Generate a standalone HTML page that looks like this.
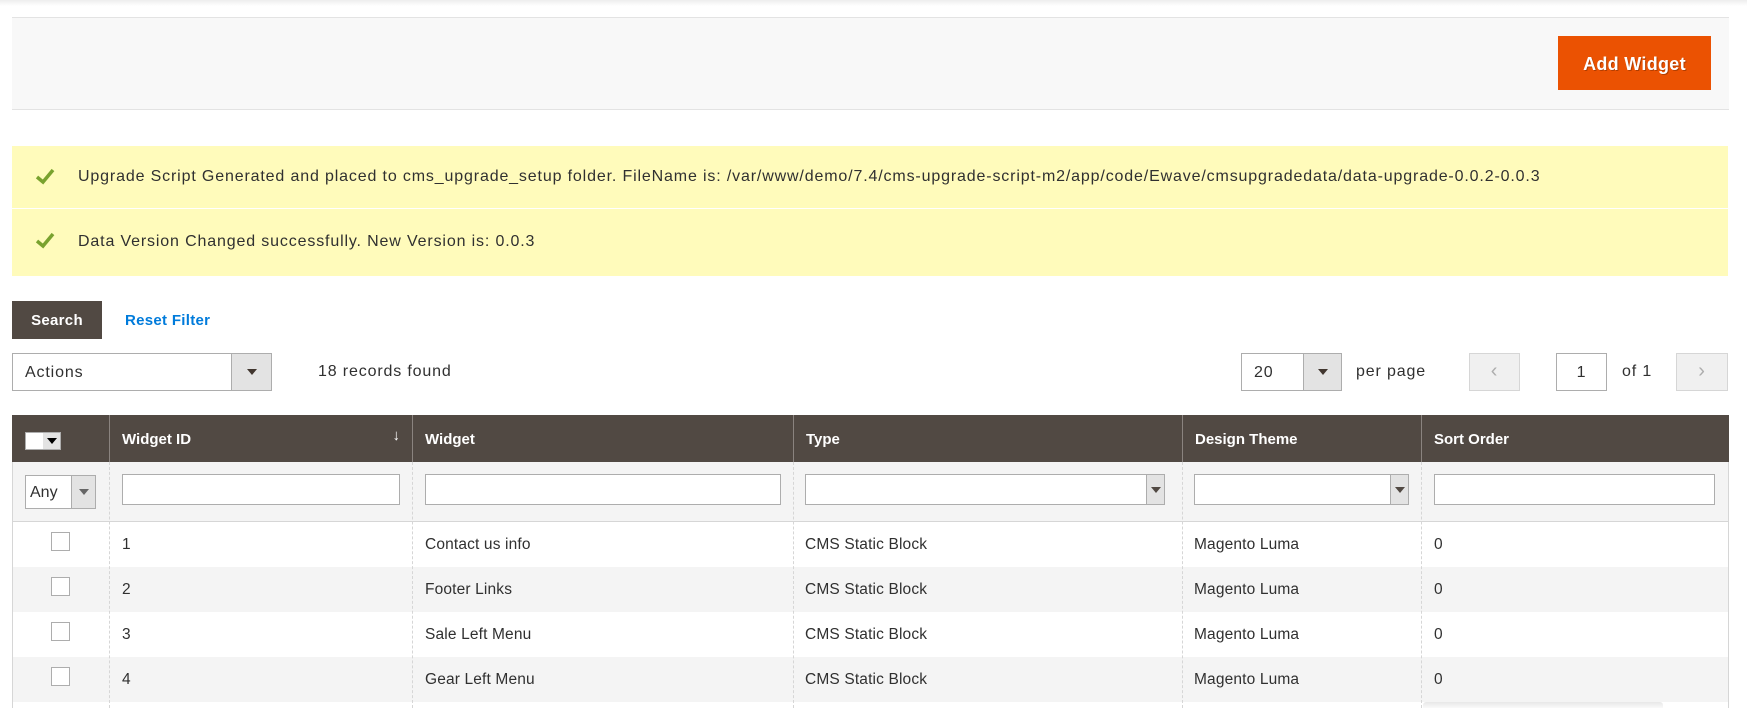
<!DOCTYPE html>
<html><head><meta charset="utf-8"><style>
*{box-sizing:border-box;margin:0;padding:0}
body{width:1747px;height:708px;overflow:hidden;background:#fff;font-family:"Liberation Sans",sans-serif;color:#303030;font-size:16px;position:relative;letter-spacing:0.85px}
.a{position:absolute}
.topsh{left:0;top:0;width:1747px;height:6px;background:linear-gradient(#eee,#fff)}
.bar{left:12px;top:17px;width:1717px;height:93px;background:#f8f8f8;border-top:1px solid #e3e3e3;border-bottom:1px solid #e3e3e3}
.btn-add{left:1558px;top:36px;width:153px;height:54px;background:#eb5202;color:#fff;font-weight:bold;font-size:18px;line-height:56px;text-align:center;text-shadow:1px 1px 0 rgba(0,0,0,.25);letter-spacing:0.3px}
.msg{left:12px;width:1716px;background:#fffbbb;line-height:20px}
.msg span{position:absolute;left:66px}
.chk{position:absolute;left:23px;width:20px;height:20px}
.sbtn{left:12px;top:301px;width:90px;height:38px;background:#514943;color:#fff;font-weight:bold;font-size:15px;line-height:40px;text-align:center;letter-spacing:0.3px}
.link{left:125px;top:312px;color:#007bdb;font-weight:bold;font-size:15px;letter-spacing:0.3px}
.sel{border:1px solid #adadad;background:#fff;height:38px}
.sel .ar{position:absolute;right:0;top:0;bottom:0;background:#e3e3e3;border-left:1px solid #adadad}
.tri{position:absolute;left:50%;top:50%;margin-left:-5px;margin-top:-3px;border-left:5px solid transparent;border-right:5px solid transparent;border-top:6px solid #41362f}
.th{top:415px;height:47px;background:#514943;color:#fff;font-weight:bold;font-size:15px;line-height:49px;padding-left:12px;border-left:1px solid #8a837f;letter-spacing:0}
.inp{border:1px solid #adadad;background:#fff;height:31px;top:474px}
.vd{width:0;border-left:1px dashed #d6d6d6;top:462px;height:246px}
.cb{width:19px;height:19px;border:1px solid #adadad;background:#fff}
.c{font-size:15.5px;letter-spacing:0.15px}
</style></head><body>
<div class="a topsh"></div>
<div class="a bar"></div>
<div class="a btn-add">Add Widget</div>

<div class="a msg" style="top:146px;height:62px"><svg class="chk" style="top:20px" viewBox="0 0 20 20"><path d="M2 11 L8 16 L18 4" fill="none" stroke="#79a22e" stroke-width="3.5"/></svg><span style="top:21px">Upgrade Script Generated and placed to cms_upgrade_setup folder. FileName is: /var/www/demo/7.4/cms-upgrade-script-m2/app/code/Ewave/cmsupgradedata/data-upgrade-0.0.2-0.0.3</span></div>
<div class="a msg" style="top:209px;height:67px"><svg class="chk" style="top:21px" viewBox="0 0 20 20"><path d="M2 11 L8 16 L18 4" fill="none" stroke="#79a22e" stroke-width="3.5"/></svg><span style="top:23px">Data Version Changed successfully. New Version is: 0.0.3</span></div>

<div class="a sbtn">Search</div>
<div class="a link">Reset Filter</div>

<div class="a sel" style="left:12px;top:353px;width:260px"><span class="a" style="left:12px;top:10px">Actions</span><div class="ar" style="width:40px"><div class="tri"></div></div></div>
<div class="a" style="left:318px;top:363px">18 records found</div>

<div class="a sel" style="left:1241px;top:353px;width:101px"><span class="a" style="left:12px;top:10px">20</span><div class="ar" style="width:38px"><div class="tri"></div></div></div>
<div class="a" style="left:1356px;top:363px">per page</div>
<div class="a" style="left:1469px;top:353px;width:51px;height:38px;background:#f0f0f0;border:1px solid #d6d6d6;color:#adadad;text-align:center;line-height:34px;font-size:20px">&#8249;</div>
<div class="a sel" style="left:1556px;top:353px;width:51px;text-align:center;line-height:37px">1</div>
<div class="a" style="left:1622px;top:363px">of 1</div>
<div class="a" style="left:1676px;top:353px;width:52px;height:38px;background:#f0f0f0;border:1px solid #d6d6d6;color:#adadad;text-align:center;line-height:34px;font-size:20px">&#8250;</div>

<div class="a" style="left:12px;top:415px;width:1717px;height:293px;border-left:1px solid #d6d6d6;border-right:1px solid #d6d6d6"></div>
<div class="a th" style="left:12px;width:97px;border-left:none"><div class="a" style="left:13px;top:17px;width:36px;height:18px;background:#fff;border:1px solid #adadad"><div class="a" style="right:0;top:0;width:17px;height:16px;background:#e3e3e3"><div class="tri" style="border-top-color:#000"></div></div></div></div>
<div class="a th" style="left:109px;width:303px">Widget ID<span class="a" style="right:12px;top:-4px;font-weight:normal">&#8595;</span></div>
<div class="a th" style="left:412px;width:381px">Widget</div>
<div class="a th" style="left:793px;width:389px">Type</div>
<div class="a th" style="left:1182px;width:239px">Design Theme</div>
<div class="a th" style="left:1421px;width:308px">Sort Order</div>

<div class="a" style="left:13px;top:462px;width:1715px;height:60px;background:#f4f4f4;border-bottom:1px solid #d6d6d6"></div>
<div class="a" style="left:13px;top:567px;width:1715px;height:45px;background:#f4f4f4"></div>
<div class="a" style="left:13px;top:657px;width:1715px;height:45px;background:#f4f4f4"></div>

<div class="a vd" style="left:109px"></div>
<div class="a vd" style="left:412px"></div>
<div class="a vd" style="left:793px"></div>
<div class="a vd" style="left:1182px"></div>
<div class="a vd" style="left:1421px"></div>

<div class="a sel" style="left:25px;top:475px;width:71px;height:34px"><span class="a" style="left:4px;top:8px;letter-spacing:0">Any</span><div class="ar" style="width:24px"><div class="tri" style="border-top-color:#666"></div></div></div>
<div class="a inp" style="left:122px;width:278px"></div>
<div class="a inp" style="left:425px;width:356px"></div>
<div class="a inp" style="left:805px;width:360px"><div class="a" style="right:0;top:0;bottom:0;width:18px;background:#e3e3e3;border-left:1px solid #adadad"><div class="tri" style="border-top-color:#514943"></div></div></div>
<div class="a inp" style="left:1194px;width:215px"><div class="a" style="right:0;top:0;bottom:0;width:18px;background:#e3e3e3;border-left:1px solid #adadad"><div class="tri" style="border-top-color:#514943"></div></div></div>
<div class="a inp" style="left:1434px;width:281px"></div>

<div class="a cb" style="left:51px;top:532px"></div>
<div class="a cb" style="left:51px;top:577px"></div>
<div class="a cb" style="left:51px;top:622px"></div>
<div class="a cb" style="left:51px;top:667px"></div>

<div class="a c" style="left:122px;top:536px">1</div><div class="a c" style="left:425px;top:536px">Contact us info</div><div class="a c" style="left:805px;top:536px">CMS Static Block</div><div class="a c" style="left:1194px;top:536px">Magento Luma</div><div class="a c" style="left:1434px;top:536px">0</div>
<div class="a c" style="left:122px;top:581px">2</div><div class="a c" style="left:425px;top:581px">Footer Links</div><div class="a c" style="left:805px;top:581px">CMS Static Block</div><div class="a c" style="left:1194px;top:581px">Magento Luma</div><div class="a c" style="left:1434px;top:581px">0</div>
<div class="a c" style="left:122px;top:626px">3</div><div class="a c" style="left:425px;top:626px">Sale Left Menu</div><div class="a c" style="left:805px;top:626px">CMS Static Block</div><div class="a c" style="left:1194px;top:626px">Magento Luma</div><div class="a c" style="left:1434px;top:626px">0</div>
<div class="a c" style="left:122px;top:671px">4</div><div class="a c" style="left:425px;top:671px">Gear Left Menu</div><div class="a c" style="left:805px;top:671px">CMS Static Block</div><div class="a c" style="left:1194px;top:671px">Magento Luma</div><div class="a c" style="left:1434px;top:671px">0</div>

<div class="a" style="left:1423px;top:702px;width:240px;height:6px;background:linear-gradient(#e8e8e8,#fafafa);border-radius:3px 3px 0 0"></div>
</body></html>
